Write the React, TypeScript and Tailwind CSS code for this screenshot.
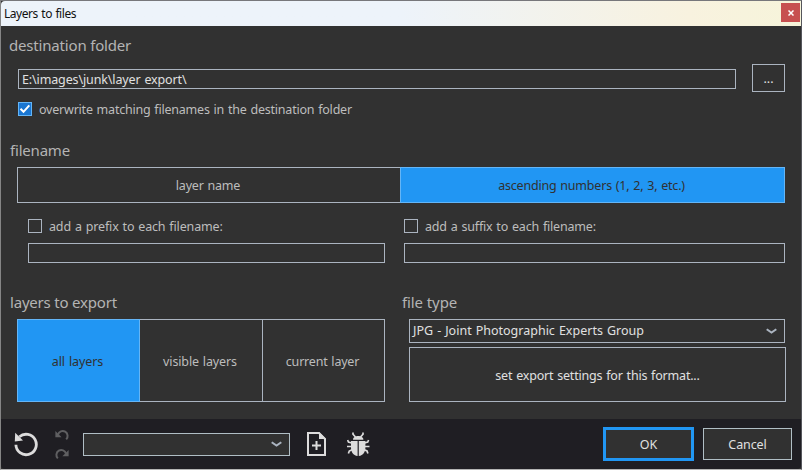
import type { ReactNode } from "react";

const line = "border border-[#abb4c0]";

function Chevron() {
  return (
    <svg width="11" height="6" viewBox="0 0 11 6" fill="none" stroke="#abb4c0" strokeWidth="2">
      <path d="M0.7 1.2 L5.5 4.6 L10.3 1.2" />
    </svg>
  );
}

function Heading({ children, className = "" }: { children: ReactNode; className?: string }) {
  return (
    <h2 className={`h-6 whitespace-nowrap text-[15px] leading-[22px] text-[#b4b4b4] [word-spacing:0] ${className}`}>{children}</h2>
  );
}

function Check({ label, checked = false, spacing }: { label: string; checked?: boolean; spacing: string }) {
  return (
    <label className="flex h-3.5 items-center gap-[7px] whitespace-nowrap">
      <span
        className={`flex h-3.5 w-3.5 shrink-0 items-center justify-center border ${checked ? "border-[#64b5f6] bg-[#1976d2]" : "border-[#abb4c0]"}`}
      >
        {checked && (
          <svg width="12" height="12" viewBox="0 0 12 12" fill="none" stroke="white" strokeWidth="2">
            <path d="M1.5 5.8 L4.5 8.8 L10.3 2.3" />
          </svg>
        )}
      </span>
      <span className={`pt-0.5 ${spacing}`}>{label}</span>
    </label>
  );
}

export default function App() {
  return (
    <div className="flex h-[470px] w-[802px] flex-col overflow-hidden border border-t-[#77777b] border-r-[#55565c] border-b-[#b4b4b4] border-l-[#858585] bg-[#313131] font-['Noto_Sans','Open_Sans',sans-serif] text-[12.5px] text-[#bdbdbd] [word-spacing:0.8px] [&_button]:[word-spacing:0.8px]">
      <header className="flex h-[25px] shrink-0 justify-between rounded-tl bg-linear-to-r from-[#edf3fa] from-50% via-[#f8f2df] via-86% to-[#f6f4da]">
        <h1 className="pl-[3px] text-[12px] leading-[26px] tracking-[-0.46px] text-[#111]">Layers to files</h1>
        <button className="mt-0.5 mr-px flex h-[19px] w-[19px] items-center justify-center bg-[#c75050]">
          <svg width="6" height="6" viewBox="0 0 6 6" fill="none" stroke="white" strokeWidth="1.5">
            <path d="M0.5 0.5 L5.5 5.5 M5.5 0.5 L0.5 5.5" />
          </svg>
        </button>
      </header>

      <main className="flex h-[393px] shrink-0 flex-col">
        <section className="pt-2">
          <Heading className="pl-2 tracking-[-0.18px]">destination folder</Heading>
          <div className="mt-1.5 flex h-7 items-center gap-4 pl-[17px]">
            <div className={`mt-0.5 h-5 w-[718px] pl-[3px] leading-[20px] tracking-[-0.13px] text-[#e0e0e0] ${line}`}>
              E:\images\junk\layer export\
            </div>
            <button className={`h-7 w-[33px] leading-[28px] text-[#e0e0e0] ${line}`}>...</button>
          </div>
          <div className="mt-2.5 pl-[17px]">
            <Check checked label="overwrite matching filenames in the destination folder" spacing="tracking-[-0.21px]" />
          </div>
        </section>

        <section className="pt-[23px]">
          <Heading className="pl-[9px] tracking-[-0.2px]">filename</Heading>
          <div className="mt-1 ml-4 flex h-9 tracking-[-0.2px]">
            <button className={`w-[383px] border-r-0 pt-0.5 pr-0.5 ${line}`}>layer name</button>
            <button className="w-[385px] border border-[#64b5f6] bg-[#2196f3] pt-0.5 pr-0.5 text-[#313131]">
              ascending numbers (1, 2, 3, etc.)
            </button>
          </div>
          <div className="mt-4 ml-[27px] flex gap-[19px]">
            <div className="w-[357px]">
              <Check label="add a prefix to each filename:" spacing="tracking-[-0.14px]" />
              <div className={`mt-2.5 h-5 ${line}`} />
            </div>
            <div className="w-[381px]">
              <Check label="add a suffix to each filename:" spacing="tracking-[-0.18px]" />
              <div className={`mt-2.5 h-5 ${line}`} />
            </div>
          </div>
        </section>

        <section className="flex pt-7">
          <div className="w-[392px]">
            <Heading className="pl-[9px] tracking-[-0.2px]">layers to export</Heading>
            <div className="mt-1 ml-4 flex h-[83px]">
              <button className="w-[123px] border border-[#64b5f6] bg-[#2196f3] pt-[3px] pr-0.5 tracking-[-0.08px] text-[#313131]">all layers</button>
              <button className={`w-[123px] border-l-0 pt-[3px] pr-0.5 tracking-[-0.13px] ${line}`}>visible layers</button>
              <button className={`w-[122px] border-l-0 pt-[3px] pr-0.5 tracking-[-0.2px] ${line}`}>current layer</button>
            </div>
          </div>
          <div>
            <Heading className="pl-[9px] tracking-[-0.1px]">file type</Heading>
            <div className="mt-1 ml-4 flex flex-col gap-1 text-[#e0e0e0]">
              <div className={`flex h-6 w-[376px] items-center justify-between pr-[7px] pl-[3px] ${line}`}>
                <span className="leading-[22px]">JPG - Joint Photographic Experts Group</span>
                <Chevron />
              </div>
              <button className={`h-[55px] w-[377px] pt-[3px] tracking-[-0.19px] ${line}`}>set export settings for this format...</button>
            </div>
          </div>
        </section>
      </main>

      <footer className="flex flex-1 items-center rounded-b bg-[#1f1e23] pl-[13px]">
        <svg width="24" height="26" viewBox="0 0 24 26">
          <path d="M1.9 13.8 A10.2 10.2 0 1 0 5.4 5.8" fill="none" stroke="#dcdcdc" strokeWidth="2.8" />
          <path d="M1.2 1.8 L0.8 10.6 L9 9.4 Z" fill="#dcdcdc" />
        </svg>
        <div className="ml-[17px] flex flex-col gap-[7px]">
          <svg width="14" height="12" viewBox="0 0 14 12">
            <path d="M3 5.6 A4.9 4.9 0 1 1 11.2 10.4" fill="none" stroke="#5f5f61" strokeWidth="2" />
            <path d="M0.4 2 V8.2 H6.6 Z" fill="#5f5f61" />
          </svg>
          <svg width="14" height="12" viewBox="0 0 14 12">
            <path d="M11 5.6 A4.9 4.9 0 1 0 2.8 10.4" fill="none" stroke="#5f5f61" strokeWidth="2" />
            <path d="M13.6 2 V8.2 H7.4 Z" fill="#5f5f61" />
          </svg>
        </div>
        <div className="ml-3.5 flex h-[23px] w-[207px] items-center justify-end border border-[#b0bec5] bg-[#313131] pr-[7px]">
          <Chevron />
        </div>
        <svg className="ml-[17px]" width="19" height="24" viewBox="0 0 19 24">
          <path d="M1 1 H12 L18 7 V23 H1 Z" fill="none" stroke="#dcdcdc" strokeWidth="2" />
          <path d="M12 0 V7 H19 Z M8.5 9 H10.5 V18 H8.5 Z M5 12.5 H14 V14.5 H5 Z" fill="#dcdcdc" />
        </svg>
        <svg className="ml-[21px]" width="23" height="24" viewBox="0 0 23 24">
          <path
            d="M6 0.5 V2.2 L8.5 5 M16 0.5 V2.2 L13.5 5 M6.5 11.5 L1.5 10 L0.6 8 M15.5 11.5 L20.7 10 L21.6 8 M6 14.5 H0 M16 14.5 H22.5 M6.5 17 L2.3 19 L1.4 21.5 M15.5 17 L20 19 L20.9 21.5"
            fill="none"
            stroke="#dcdcdc"
            strokeWidth="1.7"
          />
          <path d="M6 7.7 C6 2.8 16.4 2.8 16.4 7.7 Z" fill="#dcdcdc" />
          <path d="M4 9 H10.6 V24 C6.2 23.4 4 19.8 4 15.5 Z M11.8 9 H18.4 V15.5 C18.4 19.8 16.2 23.4 11.8 24 Z" fill="#dcdcdc" />
        </svg>
        <button className="ml-[233px] h-[34px] w-[91px] border-3 border-[#2196f3] bg-[#313131] pt-0.5 text-[#e0e0e0]">OK</button>
        <button className="ml-[9px] h-8 w-[89px] border border-[#b0bec5] bg-[#313131] pt-0.5 tracking-[-0.1px] text-[#e0e0e0]">Cancel</button>
      </footer>
    </div>
  );
}
